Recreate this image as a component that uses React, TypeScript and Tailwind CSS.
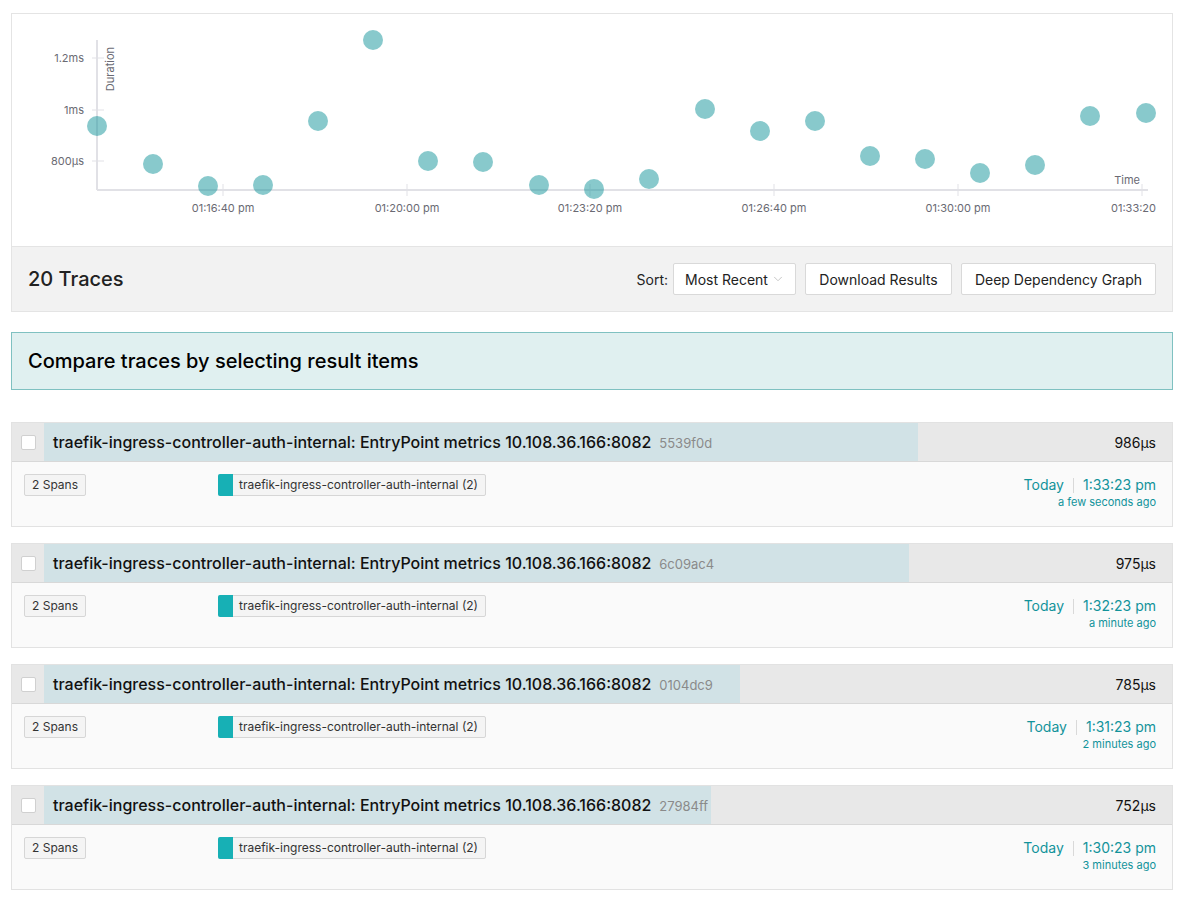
import { ChevronDown } from "lucide-react";

const MAX_DURATION = 1272;

const dots: [number, number][] = [
  [97, 126], [153, 164], [208, 186], [263, 185], [318, 121],
  [373, 40], [428, 161], [483, 162], [539, 185], [594, 189],
  [649, 179], [705, 109], [760, 131], [815, 121], [870, 156],
  [925, 159], [980, 173], [1035, 165], [1090, 116], [1146, 113],
];

const xTicks = [
  { x: 223, label: "01:16:40 pm" },
  { x: 407, label: "01:20:00 pm" },
  { x: 590, label: "01:23:20 pm" },
  { x: 774, label: "01:26:40 pm" },
  { x: 958, label: "01:30:00 pm" },
];

const yTicks = [
  { y: 58, label: "1.2ms" },
  { y: 110, label: "1ms" },
  { y: 161, label: "800µs" },
];

const traces = [
  { id: "5539f0d", duration: 986, time: "1:33:23 pm", ago: "a few seconds ago" },
  { id: "6c09ac4", duration: 975, time: "1:32:23 pm", ago: "a minute ago" },
  { id: "0104dc9", duration: 785, time: "1:31:23 pm", ago: "2 minutes ago" },
  { id: "27984ff", duration: 752, time: "1:30:23 pm", ago: "3 minutes ago" },
];

const TITLE = "traefik-ingress-controller-auth-internal: EntryPoint metrics 10.108.36.166:8082";

const ScatterPlot = () => {
  return (
    <svg width="1160" height="232" className="block">
      <g transform="translate(-12,-14)" fontFamily="Inter, sans-serif">
        <line x1="97" y1="40" x2="97" y2="190" stroke="#e1e1e6" strokeWidth="2" />
        <line x1="97" y1="190" x2="1148" y2="190" stroke="#e1e1e6" strokeWidth="2" />
        {yTicks.map((t) => (
          <g key={t.label}>
            <line x1="92" y1={t.y} x2="104" y2={t.y} stroke="#e1e1e6" strokeWidth="1" />
            <text x="84" y={t.y + 4} textAnchor="end" fontSize="11" fill="#6a6a73">
              {t.label}
            </text>
          </g>
        ))}
        {xTicks.map((t) => (
          <g key={t.label}>
            <line x1={t.x} y1="184" x2={t.x} y2="196" stroke="#e1e1e6" strokeWidth="1" />
            <text x={t.x} y="212" textAnchor="middle" fontSize="11" fill="#6a6a73">
              {t.label}
            </text>
          </g>
        ))}
        <line x1="1142" y1="184" x2="1142" y2="196" stroke="#e1e1e6" strokeWidth="1" />
        <text x="1156" y="212" textAnchor="end" fontSize="11" fill="#6a6a73">
          01:33:20
        </text>
        <text transform="translate(114,47) rotate(-90)" textAnchor="end" fontSize="11" fill="#6a6a73">
          Duration
        </text>
        <text x="1140" y="184" textAnchor="end" fontSize="11" fill="#6a6a73">
          Time
        </text>
        {dots.map(([cx, cy], i) => (
          <circle key={i} cx={cx} cy={cy} r="10" fill="#12939a" fillOpacity="0.5" />
        ))}
      </g>
    </svg>
  );
};

const TraceCard = ({ trace }: { trace: (typeof traces)[number] }) => {
  const pct = (trace.duration / MAX_DURATION) * 100;
  return (
    <div className="h-[105px] border border-[#e2e2e2] bg-[#fafafa]">
      <div className="flex h-[39px] border-b border-[#d8d8d8] bg-[#e8e8e8]">
        <div className="flex w-[32px] shrink-0 items-center justify-center">
          <div className="h-[15px] w-[15px] rounded-[2px] border border-[#d0d0d0] bg-white" />
        </div>
        <div className="relative flex flex-1 items-center">
          <div className="absolute inset-y-0 left-0 bg-[#d1e2e6]" style={{ width: `${pct}%` }} />
          <div className="relative flex items-baseline pl-[9px]">
            <span className="text-[16px] font-medium text-[#111]">{TITLE}</span>
            <span className="ml-2 text-[13px] text-[#8a8a8a]">{trace.id}</span>
          </div>
          <span className="relative ml-auto pr-[16px] text-[14px] text-[#111]">{trace.duration}µs</span>
        </div>
      </div>
      <div className="flex items-start pl-[12px] pr-[16px] pt-[12px]">
        <div className="flex w-[194px] shrink-0">
          <span className="flex h-[22px] items-center rounded-[2px] border border-[#d6d6d6] bg-[#f4f4f4] px-[7px] text-[12px] text-[#333]">
            2 Spans
          </span>
        </div>
        <div className="flex flex-1">
          <span className="flex h-[22px] items-stretch rounded-[2px] border border-[#d6d6d6] bg-[#f4f4f4] text-[12px] text-[#333]">
            <span className="-my-px -ml-px w-[15px] rounded-l-[2px] bg-[#17b0b5]" />
            <span className="flex items-center pl-[6px] pr-[7px]">traefik-ingress-controller-auth-internal (2)</span>
          </span>
        </div>
        <div className="flex flex-col items-end text-[#12939a]">
          <div className="flex items-center text-[14px] leading-[22px]">
            <span>Today</span>
            <span className="mx-[9px] h-[15px] w-px bg-[#d9d9d9]" />
            <span>{trace.time}</span>
          </div>
          <div className="text-[11px] leading-[13px]">{trace.ago}</div>
        </div>
      </div>
    </div>
  );
};

export default function App() {
  return (
    <div className="bg-white pl-[11px] pr-[8px] pt-[13px] text-[#111]" style={{ fontFamily: "Inter, sans-serif" }}>
      <div className="border border-[#e4e4e4]">
        <div className="h-[232px] bg-white">
          <ScatterPlot />
        </div>
        <div className="flex h-[65px] items-center border-t border-[#e4e4e4] bg-[#f2f2f2] pl-[16px] pr-[16px]">
          <span className="text-[20px] font-medium text-[#222]">20 Traces</span>
          <div className="ml-auto flex items-center">
            <span className="mr-[5px] text-[14px] text-[#222]">Sort:</span>
            <div className="flex h-[32px] w-[123px] items-center justify-between rounded-[2px] border border-[#d9d9d9] bg-white pl-[11px] pr-[10px] text-[14px] text-[#222]">
              <span>Most Recent</span>
              <ChevronDown className="h-[14px] w-[14px] text-[#bfbfbf]" strokeWidth={1.5} />
            </div>
            <button className="ml-[9px] h-[32px] w-[147px] rounded-[2px] border border-[#d9d9d9] bg-white text-[14px] text-[#222]">
              Download Results
            </button>
            <button className="ml-[9px] h-[32px] w-[195px] rounded-[2px] border border-[#d9d9d9] bg-white text-[14px] text-[#222]">
              Deep Dependency Graph
            </button>
          </div>
        </div>
      </div>

      <div className="mt-[20px] flex h-[58px] items-center border border-[#7fc1c1] bg-[#e0f0f0] pl-[16px]">
        <span className="text-[20px] font-medium text-black">Compare traces by selecting result items</span>
      </div>

      <div className="mt-[32px] flex flex-col gap-[16px]">
        {traces.map((t) => (
          <TraceCard key={t.id} trace={t} />
        ))}
      </div>
    </div>
  );
}
